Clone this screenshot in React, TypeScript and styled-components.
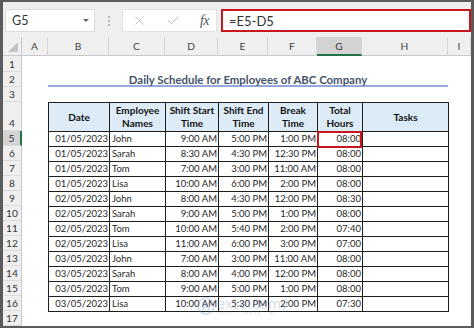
import React from 'react';
import styled, { createGlobalStyle } from 'styled-components';
import { X, Check } from 'lucide-react';

const Global = createGlobalStyle`
  html, body { margin: 0; padding: 0; background: #5b5b5b; }
  body { width: 474px; height: 328px; overflow: hidden; font-family: Lato, "Liberation Sans", sans-serif; }
  #root { width: 474px; height: 328px; }
`;

const Frame = styled.div`
  width: 474px;
  height: 328px;
  box-sizing: border-box;
  padding: 2px 3px;
  background: #5b5b5b;
`;

const Window = styled.div`
  position: relative;
  width: 468px;
  height: 324px;
  background: #fff;
  display: flex;
  flex-direction: column;
  overflow: hidden;
`;

const FormulaBar = styled.div`
  height: 35px;
  box-sizing: border-box;
  padding: 7px 0 5px 2px;
  background: #efefef;
  display: flex;
  align-items: stretch;
`;

const NameBox = styled.div`
  width: 90px;
  box-sizing: border-box;
  background: #fff;
  border: 1px solid #dcdcdc;
  display: flex;
  align-items: center;
  justify-content: space-between;
  padding: 0 5px 0 6px;
  font-size: 12.5px;
  color: #333;
`;

const Caret = styled.span`
  width: 0;
  height: 0;
  border-left: 3px solid transparent;
  border-right: 3px solid transparent;
  border-top: 3px solid #666;
`;

const Grip = styled.div`
  width: 27px;
  display: flex;
  flex-direction: column;
  align-items: center;
  justify-content: center;
  gap: 2px;
`;

const Dot = styled.span`
  width: 2px;
  height: 2px;
  background: #a8a8a8;
  border-radius: 1px;
`;

const FxBox = styled.div`
  width: 95px;
  box-sizing: border-box;
  background: #fff;
  border: 1px solid #e2e2e2;
  display: flex;
  align-items: center;
  justify-content: space-between;
  padding: 0 7px 0 9px;
  color: #b4b4b4;
`;

const Fx = styled.span`
  font-family: "Liberation Serif", serif;
  font-style: italic;
  font-size: 14px;
  color: #555;
  letter-spacing: -0.5px;
`;

const FormulaInput = styled.div`
  flex: 1;
  margin-left: 4px;
  box-sizing: border-box;
  background: #fff;
  border: 2px solid #c8161d;
  display: flex;
  align-items: center;
  padding-left: 6px;
  font-size: 13px;
  color: #333;
`;

const Sheet = styled.div`
  display: grid;
  grid-template-columns: 19px 26px 61px 56px 53px 50px 49px 45px 86px 23px;
  grid-template-rows: 19px 16px 15px 15px 29px repeat(13, 15px);
  font-size: 10.2px;
  color: #444;
`;

const Corner = styled.div`
  grid-row: 1;
  grid-column: 1;
  background: #efefef;
  border-right: 1px solid #c9c9c9;
  border-bottom: 1px solid #c9c9c9;
  display: flex;
  align-items: flex-end;
  justify-content: flex-end;
  padding: 0 3px 3px 0;
`;

const ColHead = styled.div<{ $col: number; $selected?: boolean }>`
  grid-row: 1;
  grid-column: ${(p) => p.$col};
  box-sizing: border-box;
  background: ${(p) => (p.$selected ? '#d3d3d3' : '#efefef')};
  border-right: 1px solid #d6d6d6;
  border-bottom: ${(p) => (p.$selected ? '2px solid #217346' : '1px solid #c9c9c9')};
  display: flex;
  align-items: center;
  justify-content: center;
  color: ${(p) => (p.$selected ? '#333' : '#444')};
`;

const RowHead = styled.div<{ $row: number; $selected?: boolean }>`
  grid-row: ${(p) => p.$row};
  grid-column: 1;
  box-sizing: border-box;
  background: ${(p) => (p.$selected ? '#d3d3d3' : '#efefef')};
  border-right: ${(p) => (p.$selected ? '2px solid #217346' : '1px solid #c9c9c9')};
  border-bottom: 1px solid #dcdcdc;
  display: flex;
  align-items: flex-end;
  justify-content: center;
  padding-bottom: 1px;
  line-height: 12px;
  color: #333;
`;

const Title = styled.div`
  grid-row: 3;
  grid-column: 3 / 10;
  box-sizing: border-box;
  border-bottom: 2px solid #94a9d9;
  display: flex;
  align-items: center;
  justify-content: center;
  font-size: 11.4px;
  font-weight: 700;
  color: #44546a;
  padding-top: 1px;
`;

const DataTable = styled.div`
  grid-row: 5 / 18;
  grid-column: 3 / 10;
  align-self: start;
  justify-self: start;
  width: 401px;
  height: 210px;
  box-sizing: border-box;
  display: grid;
  grid-template-columns: 60px 55px 52px 49px 48px 44px 85px;
  grid-template-rows: 28px repeat(12, 14px);
  gap: 1px;
  padding: 1px;
  background: #1e1e1e;
`;

const HeadCell = styled.div`
  background: #ddebf7;
  display: flex;
  align-items: center;
  justify-content: center;
  text-align: center;
  font-size: 10px;
  font-weight: 700;
  line-height: 13px;
  color: #111;
`;

const Cell = styled.div<{ $align: 'left' | 'right'; $mark?: boolean }>`
  position: relative;
  background: #fff;
  display: flex;
  align-items: center;
  justify-content: ${(p) => (p.$align === 'left' ? 'flex-start' : 'flex-end')};
  padding: ${(p) => (p.$align === 'left' ? '0 0 0 2px' : '0 1px 0 0')};
  font-size: 9.5px;
  line-height: 14px;
  color: #1f1f1f;
  white-space: nowrap;
  &::after {
    content: '';
    display: ${(p) => (p.$mark ? 'block' : 'none')};
    position: absolute;
    top: -1px;
    left: -1px;
    right: 0;
    bottom: -2px;
    border: 2px solid #c8161d;
    z-index: 2;
  }
`;

const Watermark = styled.div`
  position: absolute;
  left: 194px;
  top: 294px;
  display: flex;
  align-items: center;
  gap: 2px;
  opacity: 0.25;
  pointer-events: none;
`;

const WmText = styled.div`
  display: flex;
  flex-direction: column;
  line-height: 1;
`;

const WmName = styled.span`
  font-size: 15px;
  color: #5d7fb6;
  letter-spacing: 0.2px;
`;

const WmSub = styled.span`
  font-size: 4.5px;
  color: #5d7fb6;
  letter-spacing: 1.4px;
  margin-top: 1px;
`;

const columns = ['A', 'B', 'C', 'D', 'E', 'F', 'G', 'H', 'I'];

const rows: [string, string, string, string, string, string][] = [
  ['01/05/2023', 'John', '9:00 AM', '5:00 PM', '1:00 PM', '08:00'],
  ['01/05/2023', 'Sarah', '8:30 AM', '4:30 PM', '12:30 PM', '08:00'],
  ['01/05/2023', 'Tom', '7:00 AM', '3:00 PM', '11:00 AM', '08:00'],
  ['01/05/2023', 'Lisa', '10:00 AM', '6:00 PM', '2:00 PM', '08:00'],
  ['02/05/2023', 'John', '8:00 AM', '4:30 PM', '12:00 PM', '08:30'],
  ['02/05/2023', 'Sarah', '9:00 AM', '5:00 PM', '1:00 PM', '08:00'],
  ['02/05/2023', 'Tom', '10:00 AM', '5:40 PM', '2:00 PM', '07:40'],
  ['02/05/2023', 'Lisa', '11:00 AM', '6:00 PM', '3:00 PM', '07:00'],
  ['03/05/2023', 'John', '7:00 AM', '3:00 PM', '11:00 AM', '08:00'],
  ['03/05/2023', 'Sarah', '8:00 AM', '4:00 PM', '12:00 PM', '08:00'],
  ['03/05/2023', 'Tom', '9:00 AM', '5:00 PM', '1:00 PM', '08:00'],
  ['03/05/2023', 'Lisa', '10:00 AM', '5:30 PM', '2:00 PM', '07:30'],
];

const headers = [
  ['Date'],
  ['Employee', 'Names'],
  ['Shift Start', 'Time'],
  ['Shift End', 'Time'],
  ['Break', 'Time'],
  ['Total', 'Hours'],
  ['Tasks'],
];

export default function App() {
  return (
    <Frame>
      <Global />
      <Window>
        <FormulaBar>
          <NameBox>
            <span>G5</span>
            <Caret />
          </NameBox>
          <Grip>
            <Dot />
            <Dot />
            <Dot />
          </Grip>
          <FxBox>
            <X size={15} strokeWidth={1.3} />
            <Check size={15} strokeWidth={1.5} />
            <Fx>fx</Fx>
          </FxBox>
          <FormulaInput>=E5-D5</FormulaInput>
        </FormulaBar>
        <Sheet>
          <Corner>
            <svg width="10" height="10" viewBox="0 0 10 10">
              <path d="M10 0 L10 10 L0 10 Z" fill="#c4c4c4" />
            </svg>
          </Corner>
          {columns.map((c, i) => (
            <ColHead key={c} $col={i + 2} $selected={c === 'G'}>
              {c}
            </ColHead>
          ))}
          {Array.from({ length: 17 }, (_, i) => (
            <RowHead key={i} $row={i + 2} $selected={i + 1 === 5}>
              {i + 1}
            </RowHead>
          ))}
          <Title>Daily Schedule for Employees of ABC Company</Title>
          <DataTable>
            {headers.map((h, i) => (
              <HeadCell key={i}>
                {h.map((line, j) => (
                  <React.Fragment key={j}>
                    {j > 0 && <br />}
                    {line}
                  </React.Fragment>
                ))}
              </HeadCell>
            ))}
            {rows.map((r, ri) => (
              <React.Fragment key={ri}>
                <Cell $align="right">{r[0]}</Cell>
                <Cell $align="left">{r[1]}</Cell>
                <Cell $align="right">{r[2]}</Cell>
                <Cell $align="right">{r[3]}</Cell>
                <Cell $align="right">{r[4]}</Cell>
                <Cell $align="right" $mark={ri === 0}>
                  {r[5]}
                </Cell>
                <Cell $align="left" />
              </React.Fragment>
            ))}
          </DataTable>
        </Sheet>
        <Watermark aria-hidden="true">
          <svg width="18" height="18" viewBox="0 0 18 18">
            <circle cx="9" cy="9" r="8" fill="none" stroke="#5d7fb6" strokeWidth="2" />
            <path d="M5 5 L13 13 M13 5 L5 13" stroke="#5d7fb6" strokeWidth="2" />
          </svg>
          <WmText>
            <WmName>exceldemy</WmName>
            <WmSub>EXCEL · DATA · BI</WmSub>
          </WmText>
        </Watermark>
      </Window>
    </Frame>
  );
}
